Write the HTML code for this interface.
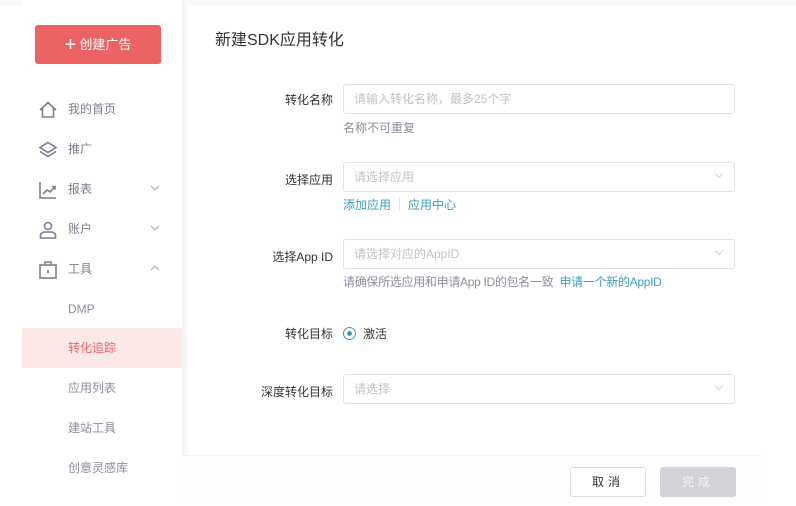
<!DOCTYPE html>
<html><head><meta charset="utf-8"><style>
*{margin:0;padding:0;box-sizing:border-box}
body{width:796px;height:506px;overflow:hidden;background:#fff;font-family:"Liberation Sans","Noto Sans CJK SC",sans-serif;position:relative}
.top{position:absolute;left:0;top:0;width:796px;height:6px;background:#f9f9fa}
.side{position:absolute;left:22px;top:0;width:160px;height:498px;background:#fff}
.btn{position:absolute;left:35px;top:25px;width:126px;height:39px;background:#ec6364;border-radius:3px;color:#fff;font-size:13px;text-align:center;line-height:39px}
.btn b{font-size:20px;font-weight:400;vertical-align:-2px;margin-right:3px}
.nav{position:absolute;left:0;width:182px;height:40px;font-size:12px;color:#7a7f8e;line-height:40px}
.nav svg{position:absolute;left:38px;top:11px}
.nav span{position:absolute;left:68px}
.nav i{position:absolute;left:150px;top:0;font-style:normal}
.sub{position:absolute;left:22px;width:160px;height:40px;line-height:40px;font-size:12px;color:#8a8f9c;padding-left:46px}
.act{background:#fde8e8;color:#ec6364}
.gap{position:absolute;left:182px;top:0;width:6px;height:498px;background:linear-gradient(90deg,#f3f3f4,#fafafa)}
.main{position:absolute;left:188px;top:6px;width:574px;height:449px;background:#fff}
.title{position:absolute;left:215px;top:26px;font-size:16px;color:#333}
.lbl{position:absolute;right:463px;font-size:12px;color:#333;text-align:right;white-space:nowrap}
.inp{position:absolute;left:343px;width:392px;height:30px;border:1px solid #e0e2e6;border-radius:3px;font-size:12px;color:#bfc2c8;line-height:28px;padding-left:10px}
.inp .ar{position:absolute;right:12px;top:8px;width:6px;height:6px;border-right:1px solid #cfd2d7;border-bottom:1px solid #cfd2d7;transform:rotate(45deg)}
.hint{position:absolute;left:343px;font-size:12px;color:#8a8f9c;white-space:nowrap}
.lk{color:#3a9fb8}
.foot{position:absolute;left:182px;top:455px;width:580px;height:43px;background:#fdfdfd;border-top:1px solid #f2f2f2}
.b1{position:absolute;left:570px;top:467px;width:76px;height:30px;border:1px solid #dcdee2;border-radius:3px;background:#fff;font-size:12px;color:#333;text-align:center;line-height:28px;letter-spacing:4px}
.b2{position:absolute;left:660px;top:467px;width:76px;height:30px;border-radius:3px;background:#d1d3d7;font-size:12px;color:#f4f4f5;text-align:center;line-height:30px;letter-spacing:4px}
</style></head><body>
<div class="top"></div>
<div class="side"></div>
<div class="gap"></div>
<div class="btn"><b>+</b>创建广告</div>

<div class="nav" style="top:89px"><svg width="20" height="20" viewBox="0 0 20 20" fill="none" stroke="#7a7f8e" stroke-width="1.6"><path d="M2 10L10 2.5 18 10M4.5 8v9h11V8"/></svg><span>我的首页</span></div>
<div class="nav" style="top:129px"><svg width="20" height="20" viewBox="0 0 20 20" fill="none" stroke="#7a7f8e" stroke-width="1.6"><path d="M10 2.5L18 7.5 10 12.5 2 7.5Z M2 11.5L10 16.5 18 11.5"/></svg><span>推广</span></div>
<div class="nav" style="top:169px"><svg width="20" height="20" viewBox="0 0 20 20" fill="none" stroke="#7a7f8e" stroke-width="1.6"><path d="M2 2v16h16M5 14l4-4 3 2 5-5M14 6.5h3v3"/></svg><span>报表</span><i><svg width="10" height="10" viewBox="0 0 10 10" style="position:static"><path d="M1 3l4 4 4-4" fill="none" stroke="#a5a9b3" stroke-width="1.1"/></svg></i></div>
<div class="nav" style="top:209px"><svg width="20" height="20" viewBox="0 0 20 20" fill="none" stroke="#7a7f8e" stroke-width="1.6"><circle cx="10" cy="6" r="3.5"/><path d="M2.5 18v-2.5c0-2 2-3.5 4-3.5h7c2 0 4 1.5 4 3.5V18Z"/></svg><span>账户</span><i><svg width="10" height="10" viewBox="0 0 10 10" style="position:static"><path d="M1 3l4 4 4-4" fill="none" stroke="#a5a9b3" stroke-width="1.1"/></svg></i></div>
<div class="nav" style="top:249px"><svg width="20" height="20" viewBox="0 0 20 20" fill="none" stroke="#7a7f8e" stroke-width="1.6"><rect x="2" y="5" width="16" height="13"/><path d="M7 5V2h6v3M10 10v3"/></svg><span>工具</span><i><svg width="10" height="10" viewBox="0 0 10 10" style="position:static"><path d="M1 7l4-4 4 4" fill="none" stroke="#a5a9b3" stroke-width="1.1"/></svg></i></div>

<div class="sub" style="top:289px">DMP</div>
<div class="sub act" style="top:328px">转化追踪</div>
<div class="sub" style="top:368px">应用列表</div>
<div class="sub" style="top:408px">建站工具</div>
<div class="sub" style="top:448px">创意灵感库</div>

<div class="main"></div>
<div class="title">新建SDK应用转化</div>

<div class="lbl" style="top:91px">转化名称</div>
<div class="inp" style="top:84px">请输入转化名称，最多25个字</div>
<div class="hint" style="top:119px">名称不可重复</div>

<div class="lbl" style="top:171px">选择应用</div>
<div class="inp" style="top:162px">请选择应用<span class="ar"></span></div>
<div class="hint lk" style="top:196px">添加应用<span style="display:inline-block;width:1px;height:14px;background:#e0e2e6;margin:0 8px;vertical-align:-2px"></span>应用中心</div>

<div class="lbl" style="top:248px">选择App ID</div>
<div class="inp" style="top:239px">请选择对应的AppID<span class="ar"></span></div>
<div class="hint" style="top:273px;letter-spacing:-0.3px">请确保所选应用和申请App ID的包名一致 &nbsp;<span class="lk">申请一个新的AppID</span></div>

<div class="lbl" style="top:325px">转化目标</div>
<div style="position:absolute;left:343px;top:327px;width:13px;height:13px;border:1.5px solid #3a9fb8;border-radius:50%"><div style="position:absolute;left:2.5px;top:2.5px;width:5px;height:5px;background:#3a9fb8;border-radius:50%"></div></div>
<div class="hint" style="left:363px;top:325px;color:#333">激活</div>

<div class="lbl" style="top:383px">深度转化目标</div>
<div class="inp" style="top:374px">请选择<span class="ar"></span></div>

<div class="foot"></div>
<div class="b1">取消</div>
<div class="b2">完成</div>
</body></html>
